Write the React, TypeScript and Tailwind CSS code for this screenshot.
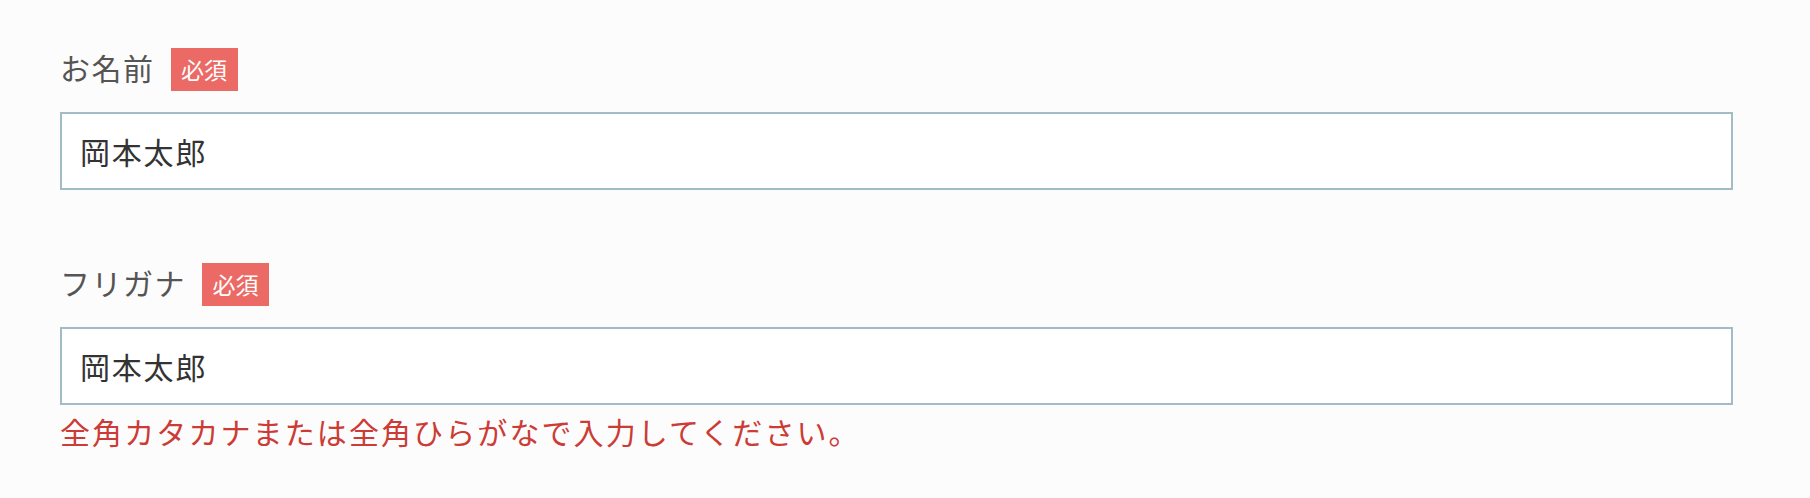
import React from 'react';

const fields = [
  { id: 'name', label: 'お名前', value: '岡本太郎', error: '' },
  { id: 'kana', label: 'フリガナ', value: '岡本太郎', error: '全角カタカナまたは全角ひらがなで入力してください。' },
];

const RequiredBadge = () => (
  <span className="inline-flex items-center justify-center h-[43px] w-[67px] bg-[#ec6a65] text-white text-[23px] leading-none">
    必須
  </span>
);

export default function App() {
  return (
    <div
      className="min-h-[498px] bg-[#fcfcfc] pt-[48px] pl-[60px]"
      style={{ fontFamily: '"Noto Sans CJK JP", "Noto Sans", sans-serif' }}
    >
      <form className="flex flex-col gap-[73px] w-[1673px]">
        {fields.map((field) => (
          <div key={field.id}>
            <div className="flex items-center gap-[16px] mb-[21px]">
              <label htmlFor={field.id} className="mb-[6px] text-[30px] leading-none tracking-[0.05em] text-[#555]">
                {field.label}
              </label>
              <RequiredBadge />
            </div>
            <input
              id={field.id}
              defaultValue={field.value}
              className="block w-full h-[78px] px-[18px] bg-white border-2 border-[#a3bbc6] text-[30px] tracking-[0.06em] text-[#333] outline-none"
            />
            {field.error && (
              <p className="mt-[5px] text-[30px] leading-[42px] tracking-[0.07em] text-[#cc3b35]">{field.error}</p>
            )}
          </div>
        ))}
      </form>
    </div>
  );
}
